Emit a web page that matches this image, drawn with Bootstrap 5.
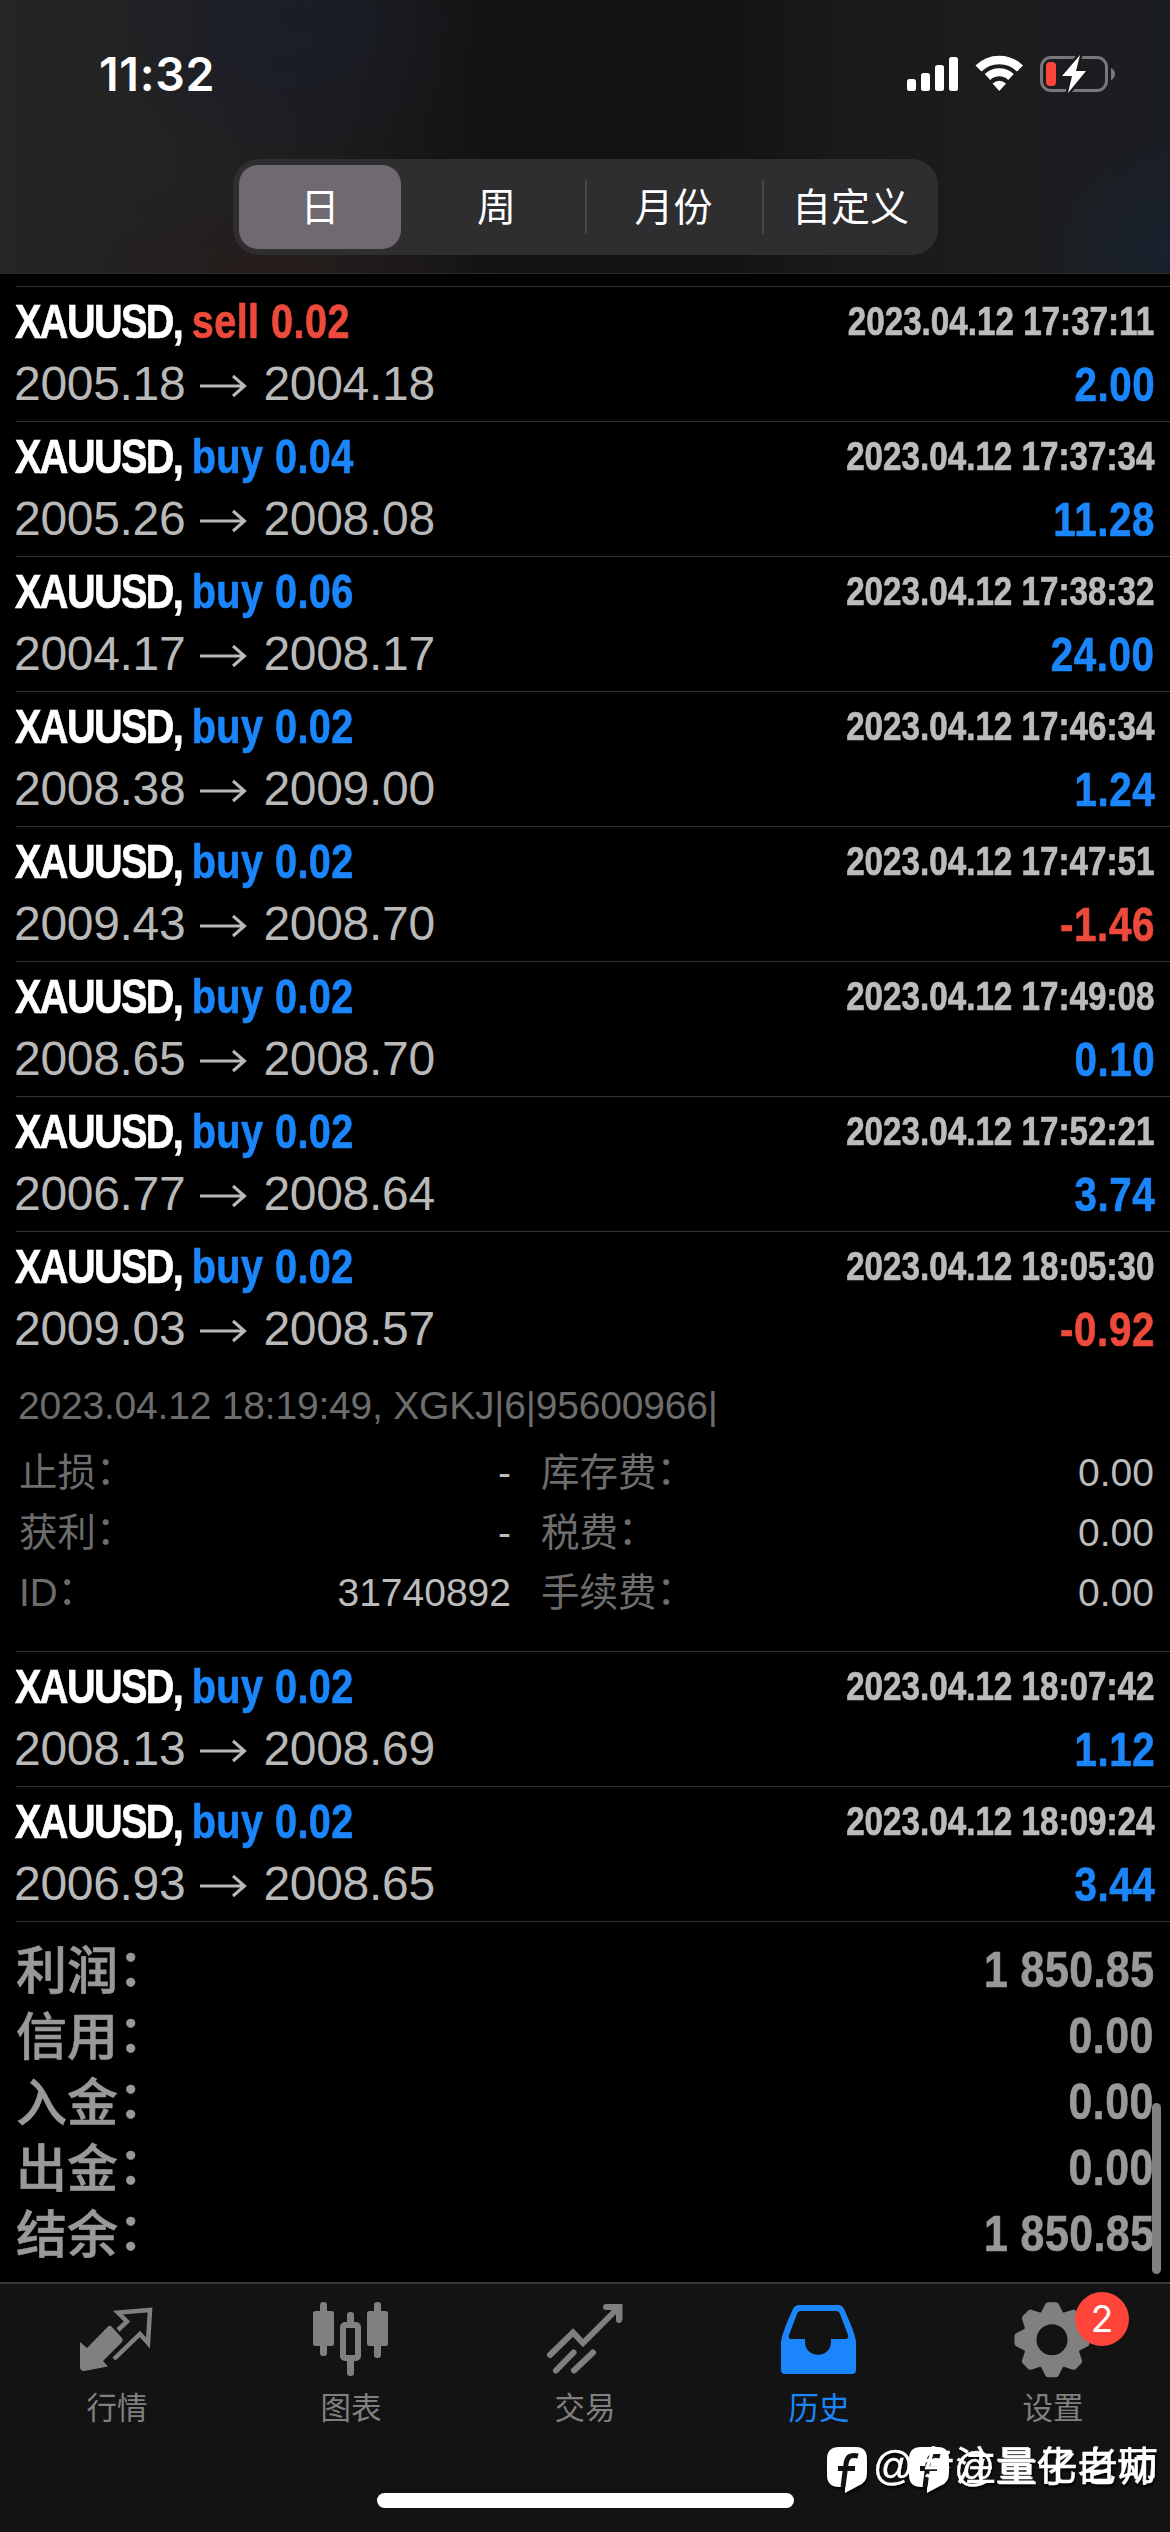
<!DOCTYPE html>
<html lang="zh-CN" data-bs-theme="dark">
<head>
<meta charset="utf-8">
<meta name="viewport" content="width=device-width, initial-scale=1">
<title>历史</title>
<link href="https://cdn.jsdelivr.net/npm/bootstrap@5.3.0/dist/css/bootstrap.min.css" rel="stylesheet">
<style>
  :root { --blue:#1b86fc; --red:#ee4a3c; --dim:#6d6d6d; --silver:#bcbcbc; }
  body { background:#000; font-family:"Liberation Sans","Noto Sans CJK SC",sans-serif; color:#fff; }
  .screen { width:1170px; height:2532px; position:relative; overflow:hidden; }
  .topbar { height:274px; border-bottom:1px solid #2b2b2c;
    background:
      radial-gradient(ellipse 190px 150px at 290px 20px, rgba(26,29,42,.9), transparent),
      radial-gradient(ellipse 230px 100px at 270px 274px, rgba(38,28,27,.9), transparent),
      radial-gradient(ellipse 130px 110px at 1170px 250px, rgba(24,34,46,.9), transparent),
      linear-gradient(90deg,#252525 0,#222223 200px,#1b1b1c 350px,#131313 480px,#131313 720px,#1a1a1a 850px,#1c1d20 1080px,#1b1d24 1170px); }
  .statusbar { height:159px; padding:0 53px 0 99px; }
  .clock { font:600 46.500px/1 Inter,sans-serif; letter-spacing:.7px; margin-top:51px; }
  .status-icons { margin-top:50px; }
  .segments { width:705px; height:96px; border-radius:26px; background:#2e2d30; padding:6px; margin-left:233px; font-size:39px; }
  .segments .seg { width:177px; height:84px; border-radius:19px; padding-top:2px; }
  .segments .seg:first-child { width:162px; background:#6e6a6f; margin-right:7px; }
  .segments .seg:last-child { margin-right:-8px; }
  .segments .rule { width:2px; height:54px; background:#464649; margin-right:-2px; border-radius:1px; }
  .deals { padding-top:12px; }
  .deal { margin-left:16px; padding-right:16px; border-top:1px solid #343434; height:135px; }
  .deal.open { height:420px; }
  .line1 { height:66px; padding-top:11px; }
  .nar { font-family:"Liberation Sans",sans-serif; font-weight:700; transform:scaleX(.84); transform-origin:100% 50%; -webkit-text-stroke:.7px currentColor; }
  .sym { font-size:48px; line-height:48px; white-space:pre; transform:scaleX(.825); transform-origin:0 50%; margin-left:-1px; }
  .sym .name { letter-spacing:-1.9px; }
  .sym .name + span { letter-spacing:.55px; }
  .when { font-size:40px; line-height:46px; color:var(--silver); transform:scaleX(.83); }
  .line2 { height:58px; padding-top:3px; }
  .prices { font-size:48px; line-height:56px; color:#b9b9b9; letter-spacing:-.3px; margin-left:-2px; }
  .prices svg { margin:4px 16px 0 15px; }
  .profit { font-size:48px; line-height:57px; letter-spacing:.7px; margin-right:-1px; }
  .buy { color:var(--blue); } .sell { color:var(--red); }
  .detail { font-size:39px; color:var(--dim); margin-left:3px; }
  .detail .note { line-height:46px; margin:27px 0 0 -1px; white-space:nowrap; letter-spacing:-.2px; }
  .detail .fields { margin-top:14px; }
  .detail .fields > div { height:60px; line-height:60px; }
  .detail .lhs { width:492px; margin-right:30px; }
  .lab { font-size:38.500px; line-height:59px; }
  .val { color:var(--silver); }
  .cln { vertical-align:.06em; line-height:0; }
  .totals { border-top:1px solid #343434; margin-left:16px; padding:15px 16px 0 0; color:#999; font-size:51px; }
  .totals > div { height:66px; line-height:66px; }
  .totals .lab2 { font-weight:500; font-family:"Noto Sans CJK SC",sans-serif; line-height:61px; -webkit-text-stroke:.6px #999; }
  .totals .num { font-size:50px; letter-spacing:.6px; transform:scaleX(.855); }
  .scroll-thumb { position:absolute; left:1152px; top:2103px; width:9px; height:171px; border-radius:5px; background:#818181; }
  .tabs { position:absolute; left:0; top:2282px; width:1170px; height:250px; background:#131313; border-top:2px solid #3a3a3a; color:#808080; }
  .tabs .tab { width:234px; position:relative; font-size:30.500px; line-height:46px; }
  .tabs .tab svg { width:234px; height:101px; display:block; }
  .tabs .tab.on { color:var(--blue); }
  .count { position:absolute; left:139px; top:8px; width:54px; height:54px; border-radius:50%; background:#ff453a; color:#fff; font:400 37px/54px Inter,sans-serif; text-align:center; }
  .home { position:absolute; left:377px; top:2493px; width:417px; height:15px; border-radius:8px; background:#fff; }
  .wm { position:absolute; left:820px; top:2430px; }
</style>
</head>
<body>
<div class="screen">
  <header class="topbar">
    <div class="statusbar d-flex justify-content-between align-items-start">
      <div class="clock">11:32</div>
      <svg class="status-icons" width="212" height="48" viewBox="905 50 212 48">
        <g fill="#fff"><rect x="907" y="79" width="9" height="12" rx="2.5"/><rect x="921" y="73" width="9" height="18" rx="2.5"/><rect x="935" y="65" width="9" height="26" rx="2.5"/><rect x="949" y="57" width="9" height="34" rx="2.5"/></g>
        <path d="M978.5 68.500A29.500 29.500 0 0 1 1020 68.500" fill="none" stroke="#fff" stroke-width="8.500"/>
        <path d="M987.500 77A17 17 0 0 1 1011 77" fill="none" stroke="#fff" stroke-width="8"/>
        <path d="M992.500 83.500q6.800-5.500 13.600 0L999.300 91z" fill="#fff"/>
        <rect x="1041.500" y="57.500" width="65" height="33" rx="9.500" fill="none" stroke="#77787a" stroke-width="3"/>
        <path d="M1111 68q4 2 4 6t-4 6z" fill="#77787a"/>
        <rect x="1046" y="62" width="10" height="24" rx="4" fill="#ff453a"/>
        <path d="M1080 55L1062 76h10l-4 17 18-22h-10z" fill="#fff" stroke="#1a1b1d" stroke-width="5" paint-order="stroke" stroke-linejoin="round"/>
      </svg>
    </div>
    <div class="segments d-flex align-items-center">
      <div class="seg d-flex align-items-center justify-content-center flex-shrink-0">日</div>
      <div class="seg d-flex align-items-center justify-content-center flex-shrink-0">周</div>
      <div class="rule flex-shrink-0"></div>
      <div class="seg d-flex align-items-center justify-content-center flex-shrink-0">月份</div>
      <div class="rule flex-shrink-0"></div>
      <div class="seg d-flex align-items-center justify-content-center flex-shrink-0">自定义</div>
    </div>
  </header>

  <main class="deals" id="deals"></main>

  <section class="totals">
    <div class="d-flex justify-content-between"><span class="lab2">利润<span class="cln">：</span></span><span class="nar num">1 850.85</span></div>
    <div class="d-flex justify-content-between"><span class="lab2">信用<span class="cln">：</span></span><span class="nar num">0.00</span></div>
    <div class="d-flex justify-content-between"><span class="lab2">入金<span class="cln">：</span></span><span class="nar num">0.00</span></div>
    <div class="d-flex justify-content-between"><span class="lab2">出金<span class="cln">：</span></span><span class="nar num">0.00</span></div>
    <div class="d-flex justify-content-between"><span class="lab2">结余<span class="cln">：</span></span><span class="nar num">1 850.85</span></div>
  </section>
  <div class="scroll-thumb"></div>

  <nav class="tabs d-flex">
    <div class="tab text-center">
      <svg viewBox="0 2284 234 101"><path d="M108 2326.500q2-1.500 4 .5l10 11q1.500 2 0 4l-19 19 5 5.500-24 4.500q-4 0-4-4v-25l7 6z" fill="currentColor"/><path d="M118 2330l9-8.500-9-9 32-2.500-2 33-8-9-26 25" fill="none" stroke="currentColor" stroke-width="4.500"/></svg>
      <div>行情</div></div>
    <div class="tab text-center">
      <svg viewBox="234 2284 234 101"><g fill="currentColor"><rect x="320" y="2302" width="7" height="54" rx="3"/><rect x="313" y="2311" width="21" height="35" rx="2.500"/><rect x="374" y="2302" width="7" height="56" rx="3"/><rect x="367" y="2311" width="21" height="35" rx="2.500"/><rect x="347" y="2312" width="7" height="14" rx="3"/><rect x="347" y="2356" width="7" height="20" rx="3"/></g><rect x="343" y="2325" width="15" height="33" rx="2" fill="none" stroke="currentColor" stroke-width="6"/></svg>
      <div>图表</div></div>
    <div class="tab text-center">
      <svg viewBox="468 2284 234 101"><g fill="none" stroke="currentColor" stroke-width="6" stroke-linecap="round"><path d="M550 2355l23-22.500 10 10.500 36-36"/><path d="M606 2307h13.500v13" stroke-linecap="butt"/><path d="M606 2307h13v13"/><path d="M556 2370.500l17.500-18"/><path d="M574 2370.500l19-18"/></g></svg>
      <div>交易</div></div>
    <div class="tab on text-center">
      <svg viewBox="702 2284 234 101"><path fill-rule="evenodd" fill="currentColor" d="M799 2305h39q4 0 6 4 12 26 12 34v27q0 4-4 4h-67q-4 0-4-4v-27q0-8 12-34 2-4 6-4zM801 2311q-3 0-4 3l-8 21q-1 4 2 4h14v3c0 17 26 17 26 0v-3h14q4 0 3-4l-8-21q-1-3-4-3z"/></svg>
      <div>历史</div></div>
    <div class="tab text-center">
      <svg viewBox="936 2284 234 101"><g transform="translate(1052 2339.700)" fill="none" stroke="currentColor"><circle r="22.500" stroke-width="14"/><g id="teeth" fill="currentColor" stroke="none"></g></g></svg>
      <div>设置</div><span class="count">2</span></div>
  </nav>
  <div class="home"></div>

  <svg class="wm" width="350" height="80" viewBox="820 2430 350 80">
    <defs><g id="mark"><path d="M12 0h17q11 0 11 12v14q0 10-9 13l-13 7v-6h-6Q0 40 0 28V12Q0 0 12 0z" fill="#fff"/><path d="M31 9c-8-2-11 1-12 8l-3 23M11 21.500h17" fill="none" stroke="#131313" stroke-width="5"/></g></defs>
    <g font-family="Liberation Sans,Noto Sans CJK SC,sans-serif" font-size="40.300" fill="#fff" stroke="#fff" stroke-width=".4" style="filter:drop-shadow(1px 2px 1px #000)">
      <use href="#mark" x="827" y="2447" stroke="none"/><use href="#mark" x="909" y="2447" stroke="none"/>
      <text x="954" y="2481">@</text><text x="997" y="2481">量子老师</text>
      <text x="873" y="2480">@</text><text x="915" y="2480">专注量化自动</text>
    </g>
  </svg>
</div>
<script>
  const deals = [
    ['sell','0.02','2005.18','2004.18','17:37:11','2.00'],
    ['buy','0.04','2005.26','2008.08','17:37:34','11.28'],
    ['buy','0.06','2004.17','2008.17','17:38:32','24.00'],
    ['buy','0.02','2008.38','2009.00','17:46:34','1.24'],
    ['buy','0.02','2009.43','2008.70','17:47:51','-1.46'],
    ['buy','0.02','2008.65','2008.70','17:49:08','0.10'],
    ['buy','0.02','2006.77','2008.64','17:52:21','3.74'],
    ['buy','0.02','2009.03','2008.57','18:05:30','-0.92', true],
    ['buy','0.02','2008.13','2008.69','18:07:42','1.12'],
    ['buy','0.02','2006.93','2008.65','18:09:24','3.44']
  ];
  const c = '<span class="cln">：</span>';
  const field = (l, v, r, w) => `<div class="d-flex"><div class="lhs d-flex justify-content-between"><span class="lab">${l}${c}</span><span class="val">${v}</span></div><div class="flex-grow-1 d-flex justify-content-between"><span class="lab">${r}${c}</span><span class="val">${w}</span></div></div>`;
  const detail = `<div class="detail"><div class="note">2023.04.12 18:19:49, XGKJ|6|95600966|</div><div class="fields">${field('止损','-','库存费','0.00')}${field('获利','-','税费','0.00')}${field('ID','31740892','手续费','0.00')}</div></div>`;
  document.getElementById('deals').innerHTML = deals.map(([side, lot, a, b, t, p, open]) => `
    <article class="deal ${open ? 'open' : ''}">
      <div class="line1 d-flex justify-content-between"><div class="nar sym"><span class="name">XAUUSD, </span><span class="${side}">${side} ${lot}</span></div><div class="nar when">2023.04.12 ${t}</div></div>
      <div class="line2 d-flex justify-content-between"><div class="prices d-flex align-items-center"><span>${a}</span><svg width="47" height="24" viewBox="0 0 47 24"><path d="M0 12h44M33 2l11.500 10L33 22" fill="none" stroke="currentColor" stroke-width="3"/></svg><span>${b}</span></div><div class="profit nar ${p[0] === '-' ? 'sell' : 'buy'}">${p}</div></div>
      ${open ? detail : ''}
    </article>`).join('');
  document.getElementById('teeth').innerHTML = [0,45,90,135,180,225,270,315].map(r => `<path transform="rotate(${r})" d="M-11-27L-6.500-36q1-1.500 3-1.500h7q2 0 3 1.500L11-27z"/>`).join('');
</script>
<script src="https://cdn.jsdelivr.net/npm/bootstrap@5.3.0/dist/js/bootstrap.bundle.min.js"></script>
</body>
</html>
